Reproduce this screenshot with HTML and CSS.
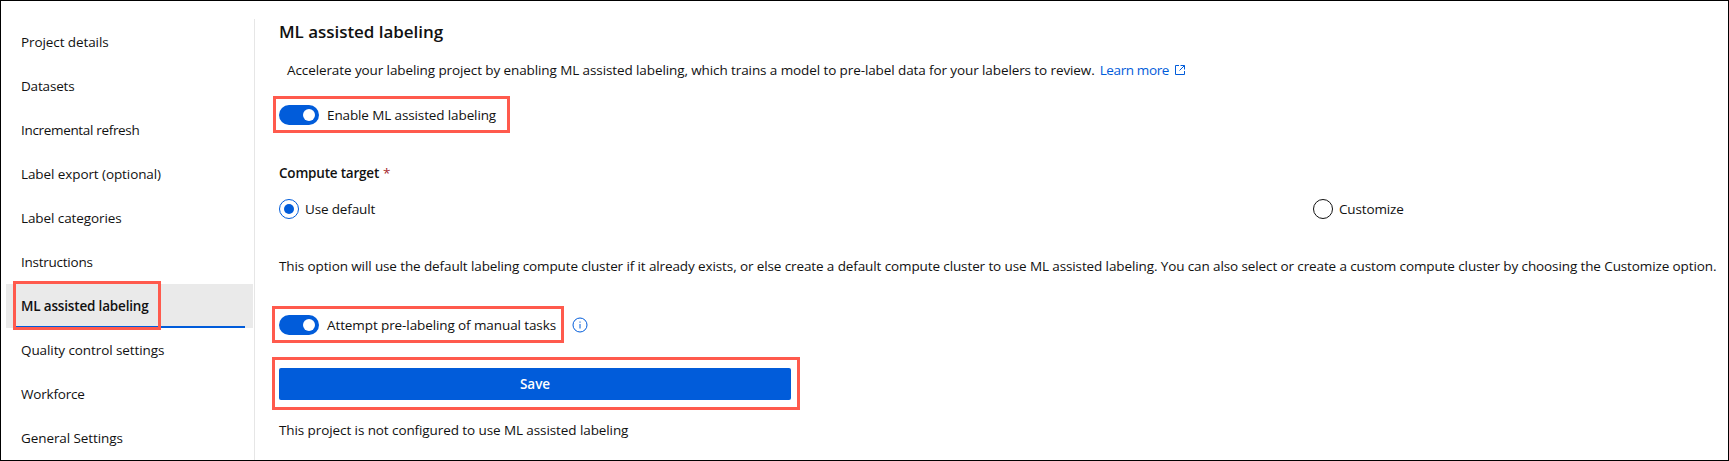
FILE: index.html
```html
<!DOCTYPE html>
<html lang="en">
<head>
<meta charset="utf-8">
<title>ML assisted labeling</title>
<link rel="stylesheet" href="styles.css">
</head>
<body>
<div class="frame">
  <nav class="sidebar">
    <a class="nav-item"><span class="t-project">Project details</span></a>
    <a class="nav-item"><span class="t-datasets">Datasets</span></a>
    <a class="nav-item"><span class="t-refresh">Incremental refresh</span></a>
    <a class="nav-item"><span class="t-export">Label export (optional)</span></a>
    <a class="nav-item"><span class="t-categories">Label categories</span></a>
    <a class="nav-item"><span class="t-instructions">Instructions</span></a>
    <a class="nav-item active"><span class="t-active">ML assisted labeling</span><i class="callout callout-nav"></i></a>
    <a class="nav-item"><span class="t-quality">Quality control settings</span></a>
    <a class="nav-item"><span class="t-workforce">Workforce</span></a>
    <a class="nav-item"><span class="t-general">General Settings</span></a>
  </nav>
  <main class="content">
    <h1 class="title"><span class="t-title">ML assisted labeling</span></h1>
    <p class="intro">
      <span class="t-intro">Accelerate your labeling project by enabling ML assisted labeling, which trains a model to pre-label data for your labelers to review.</span>
      <a class="link"><span class="t-learn">Learn more</span>
        <svg class="external" width="12" height="12" viewBox="0 0 12 12"><path d="M5 1.5H1.5v9h9V7M6.5 1.5h4V5.5M10.5 1.5L5.5 6.5"/></svg>
      </a>
    </p>
    <div class="row enable-row">
      <span class="toggle"></span><span class="t-enable">Enable ML assisted labeling</span>
      <i class="callout callout-enable"></i>
    </div>
    <div class="field-label"><span class="t-compute">Compute target</span><span class="required">*</span></div>
    <div class="radios">
      <label class="radio"><span class="dot checked"></span><span class="t-default">Use default</span></label>
      <label class="radio"><span class="dot"></span><span class="t-customize">Customize</span></label>
    </div>
    <p class="note"><span class="t-note">This option will use the default labeling compute cluster if it already exists, or else create a default compute cluster to use ML assisted labeling. You can also select or create a custom compute cluster by choosing the Customize option.</span></p>
    <div class="row attempt-row">
      <span class="toggle"></span><span class="t-attempt">Attempt pre-labeling of manual tasks</span>
      <svg class="info" width="16" height="16" viewBox="0 0 16 16"><circle cx="8" cy="8" r="7"/><path d="M8 7v4.5M8 4.5v1.2"/></svg>
      <i class="callout callout-attempt"></i>
    </div>
    <div class="save-row">
      <button class="save"><span class="t-save">Save</span></button>
      <i class="callout callout-save"></i>
    </div>
    <p class="status"><span class="t-status">This project is not configured to use ML assisted labeling</span></p>
  </main>
</div>
</body>
</html>
```
FILE: styles.css
```css
* { box-sizing: border-box; }
body { margin: 0; background: #fff; color: #111; font: 13.5px/20px "Open Sans", "Noto Sans", sans-serif; letter-spacing: -0.09px; }
p, h1 { margin: 0; }
span { white-space: nowrap; }

.frame { display: flex; width: 1729px; height: 461px; border: 1px solid #000; overflow: hidden; }

.sidebar { width: 254px; margin-top: 18px; padding: 1px 1px 0 5px; border-right: 1px solid #e6e6e6; flex: none; }
.nav-item { position: relative; display: flex; align-items: center; height: 44px; padding-left: 15px; }
.nav-item.active { background: #eaeaea; font-weight: 600; }
.nav-item.active::before { content: ""; position: absolute; left: 10px; right: 8px; bottom: 0; height: 2px; background: #015cda; }

.callout { position: absolute; border: 3px solid #ff5a4d; }
.callout-nav { left: 7px; top: -3px; width: 148px; height: 49px; }
.callout-enable { left: -6px; top: -9px; width: 237px; height: 37px; }
.callout-attempt { left: -7px; top: -9px; width: 292px; height: 37px; }
.callout-save { left: -7px; top: -11px; width: 528px; height: 53px; }

.content { flex: 1; min-width: 0; padding: 17px 0 0 24px; }
.title { height: 28px; font-size: 17px; line-height: 28px; font-weight: 600; letter-spacing: -0.04px; }
.intro { display: flex; align-items: center; height: 20px; margin-top: 14px; padding-left: 8px; gap: 5px; }
.link { display: flex; align-items: center; gap: 5px; color: #015cda; }
.external, .info { fill: none; stroke: #015cda; flex: none; }
.row { position: relative; display: flex; align-items: center; height: 20px; gap: 8px; }
.enable-row { margin-top: 25px; }
.toggle { display: flex; justify-content: flex-end; align-items: center; width: 40px; height: 20px; padding-right: 4px; border-radius: 10px; background: #015cda; }
.toggle::after { content: ""; width: 12px; height: 12px; border-radius: 50%; background: #fff; }
.field-label { display: flex; gap: 4px; height: 20px; margin-top: 38px; font-weight: 600; }
.required { color: #a4262c; font-weight: 400; }
.radios { display: grid; grid-template-columns: 1034px 1fr; height: 20px; margin-top: 16px; }
.radio { display: flex; align-items: center; gap: 6px; }
.dot { display: grid; place-items: center; width: 20px; height: 20px; border: 1px solid #111; border-radius: 50%; }
.dot.checked { border-color: #015cda; }
.dot.checked::after { content: ""; width: 10px; height: 10px; border-radius: 50%; background: #015cda; }
.note { height: 20px; margin-top: 37px; }
.attempt-row { margin-top: 39px; }
.attempt-row .info { margin-left: 8px; }
.save-row { position: relative; width: 512px; height: 32px; margin-top: 33px; }
.save { display: block; width: 100%; height: 32px; padding: 0; border: 0; border-radius: 2px; background: #015cda; color: #fff; font: inherit; font-weight: 600; }
.status { height: 20px; margin-top: 20px; }

/* Tracking per label */
.t-datasets { letter-spacing: -0.18px; }
.t-refresh { letter-spacing: -0.33px; }
.t-instructions { letter-spacing: -0.25px; }
.t-workforce { letter-spacing: -0.2px; }
.t-active { letter-spacing: -0.17px; }
.t-intro { letter-spacing: -0.098px; }
.t-learn { letter-spacing: -0.38px; }
.t-enable { letter-spacing: -0.12px; }
.t-compute { letter-spacing: -0.2px; }
.t-default { letter-spacing: -0.15px; }
.t-customize { letter-spacing: -0.15px; }
.t-note { letter-spacing: -0.111px; }
.t-attempt { letter-spacing: -0.1px; }
```
